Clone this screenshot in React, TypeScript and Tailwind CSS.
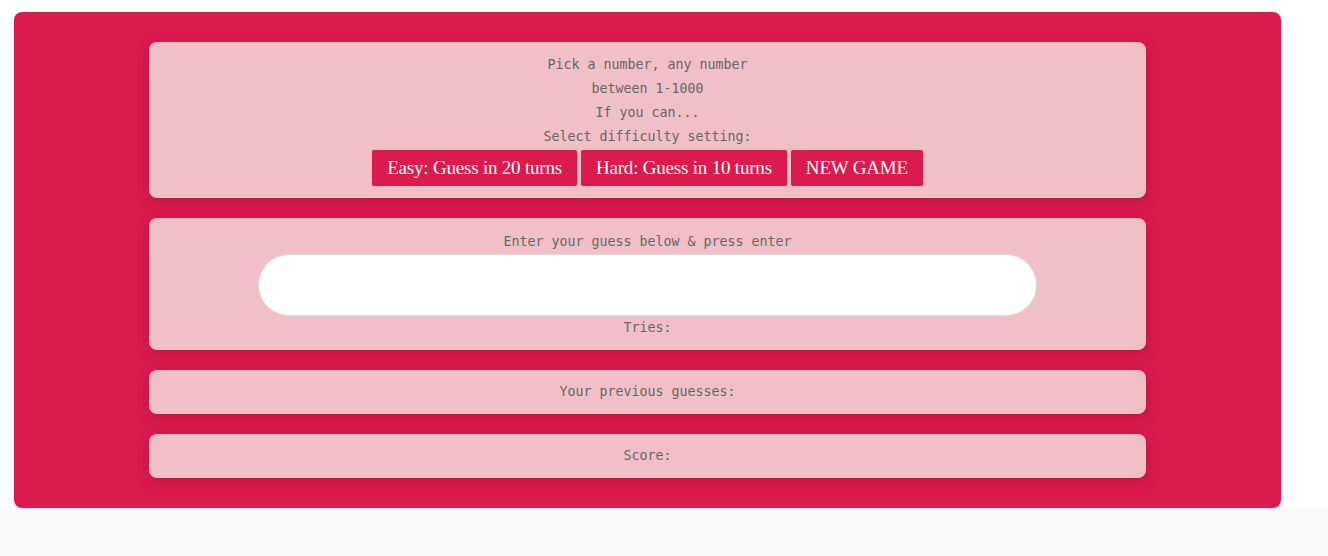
import React from "react";

const mono = { fontFamily: '"DejaVu Sans Mono", monospace' };
const serif = { fontFamily: '"Liberation Serif", "DejaVu Serif", serif' };

function Card({ children, className = "" }: { children: React.ReactNode; className?: string }) {
  return (
    <div
      className={`w-[997px] mx-auto rounded-lg bg-[#f1bfc8] text-center text-[13.3px] leading-6 text-[#666] shadow-[0_4px_14px_rgba(120,0,30,0.25)] ${className}`}
      style={mono}
    >
      {children}
    </div>
  );
}

export default function App() {
  const buttons = ["Easy: Guess in 20 turns", "Hard: Guess in 10 turns", "NEW GAME"];

  return (
    <div className="min-h-screen bg-[#fafafa]">
      <div className="bg-white pt-3 pl-[14px] pr-[47px]">
        <div className="flex flex-col gap-5 rounded-lg bg-[#db1a4d] pt-[30px] pb-[30px]">
          <Card className="pt-[11px] pb-[11px]">
            <p>Pick a number, any number</p>
            <p>between 1-1000</p>
            <p>If you can...</p>
            <p>Select difficulty setting:</p>
            <div className="flex justify-center gap-0.5">
              {buttons.map((b) => (
                <button
                  key={b}
                  className="h-[38px] rounded-[3px] border border-[#d9c3c8] bg-[#db1a4d] px-[15px] text-[19px] tracking-[-0.2px] text-white"
                  style={serif}
                >
                  {b}
                </button>
              ))}
            </div>
          </Card>

          <Card className="pt-[12px] pb-[10px]">
            <p>Enter your guess below &amp; press enter</p>
            <input
              type="text"
              className="mx-auto block h-[62px] w-[779px] rounded-full border border-[#dcdcdc] bg-white px-6 outline-none"
            />
            <p>Tries:</p>
          </Card>

          <Card className="py-[10px]">
            <p>Your previous guesses:</p>
          </Card>

          <Card className="py-[10px]">
            <p>Score:</p>
          </Card>
        </div>
      </div>
    </div>
  );
}
